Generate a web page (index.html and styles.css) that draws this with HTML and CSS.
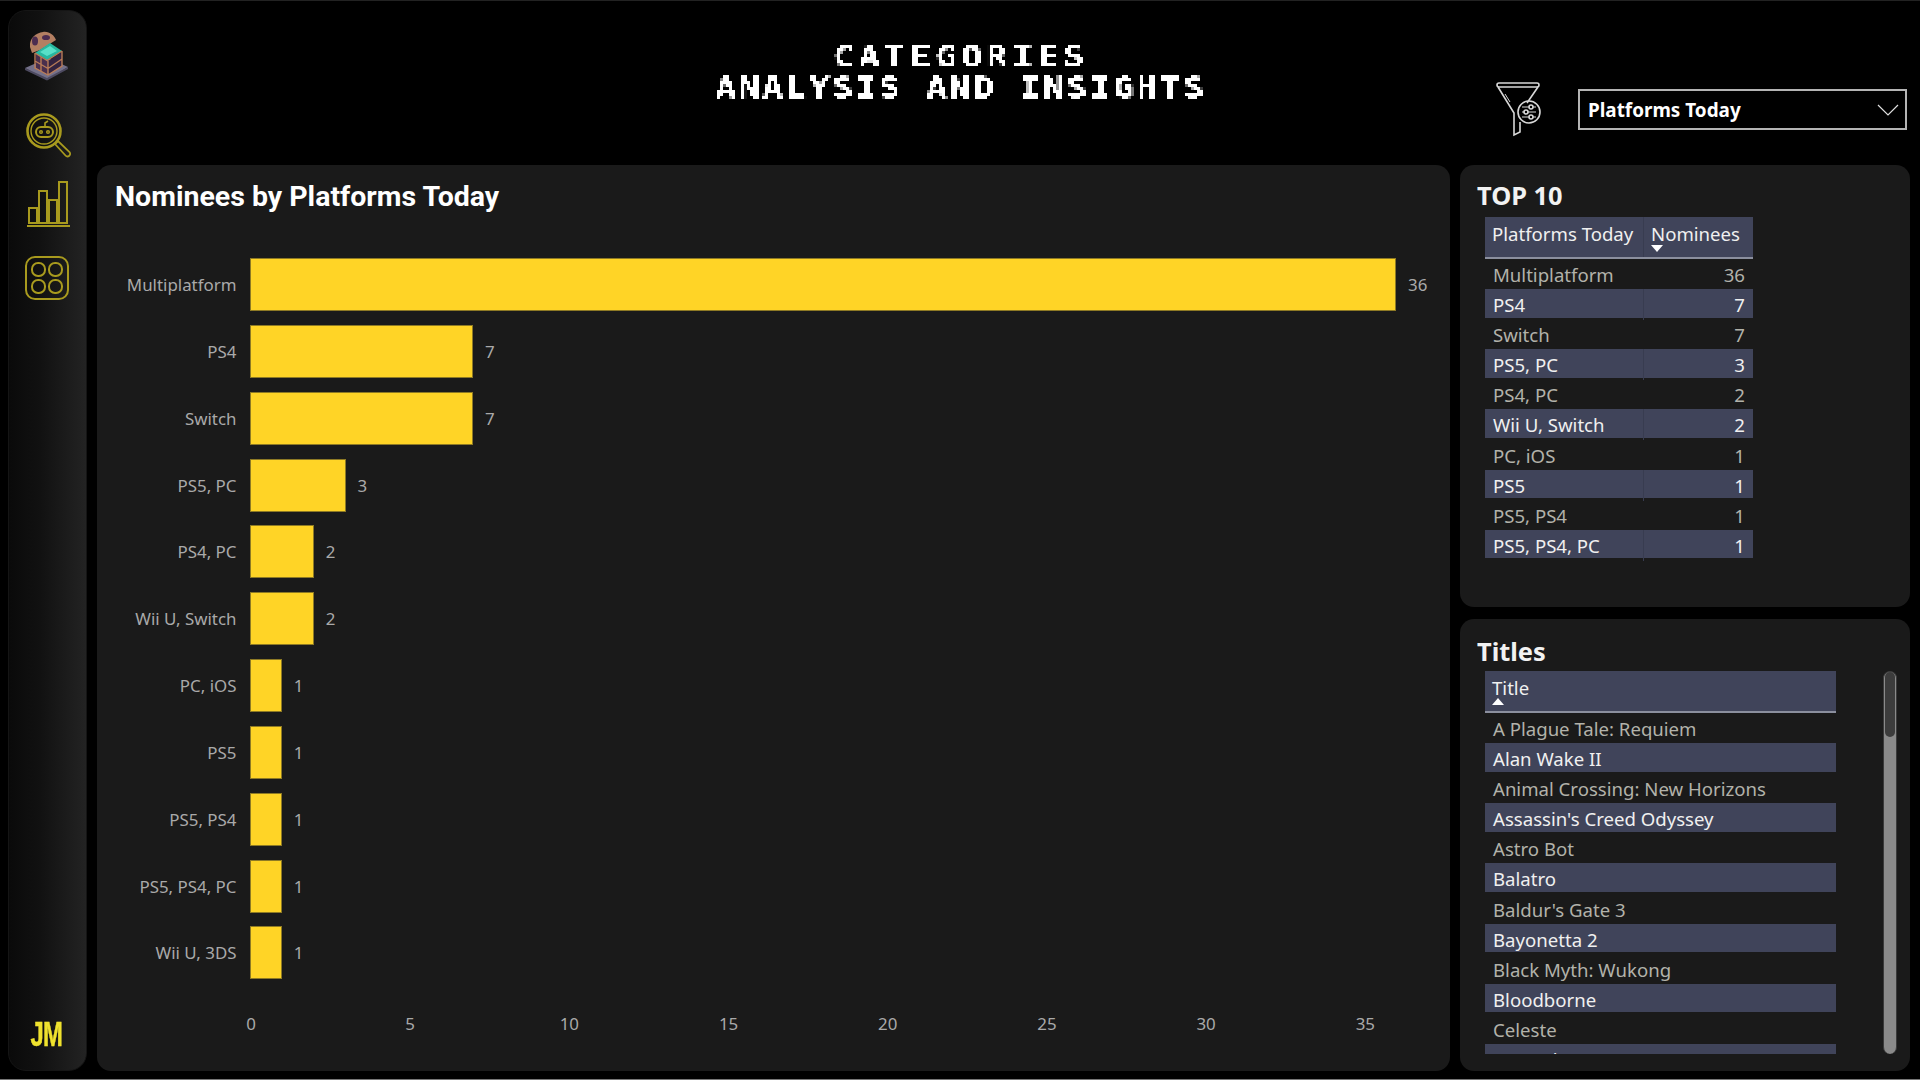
FILE: index.html
```html
<!DOCTYPE html>
<html lang="en">
<head>
<meta charset="utf-8">
<title>Categories</title>
<link rel="stylesheet" href="styles.css">
</head>
<body>
<svg class="defs" width="0" height="0" aria-hidden="true">
  <filter id="pixelate" x="0" y="0" width="100%" height="100%" color-interpolation-filters="sRGB">
    <feFlood x="1" y="1" width="1" height="1" flood-color="#fff"/>
    <feComposite width="3" height="3"/>
    <feTile result="grid"/>
    <feComposite in="SourceGraphic" in2="grid" operator="in"/>
    <feMorphology operator="dilate" radius="1"/>
    <feComponentTransfer>
      <feFuncA type="linear" slope="3" intercept="-.8"/>
    </feComponentTransfer>
  </filter>
</svg>
<aside class="sidebar">
  <svg class="nav-icon chest" viewBox="0 0 60 60" width="60" height="60">
    <path d="M7 42 L30 32 L50 41 L29 54 Z" fill="#74718a"/>
    <path d="M7 42 L29 52 L50 41 L50 43 L29 54.5 L7 44 Z" fill="#4d4a60"/>
    <path d="M18 27 L30 35 L30 49 L18 42 Z" fill="#4a2f4d"/>
    <path d="M30 35 L44 26 L44 40 L30 49 Z" fill="#33233f"/>
    <path d="M12 21 C11 12 18 7 25 6 C31 5 36 9 38 14 L22 24 L14 27 Z" fill="#b37f62"/>
    <ellipse cx="17" cy="15" rx="3" ry="4.5" fill="#4c2c50"/>
    <ellipse cx="28" cy="11.5" rx="4" ry="2.6" fill="#4c2c50"/>
    <path d="M17 27 L32 17 L44 25 L29 34 Z" fill="#27b7a0"/>
    <path d="M22 26 L32 20 L39 25 L29 30 Z" fill="#58e0c8"/>
    <path d="M17 27 L29 34.5 L44 25 M17 35 L30 42.5 L44 33 M17 27 V42 L30 49 L44 40 V25 M30 35 V49 M23 31 V45" fill="none" stroke="#b87c58" stroke-width="1.4"/>
  </svg>
  <svg class="nav-icon lens" viewBox="0 0 60 60" width="60" height="60" fill="none" stroke="#a89a1e">
    <circle cx="26" cy="26" r="16.5" stroke-width="2.6"/>
    <circle cx="26" cy="26" r="13" stroke-width="1.4"/>
    <path d="M37 39 L47.5 50.5 a2.5 2.5 0 0 0 4 -3.5 L40 36 Z" stroke-width="1.8"/>
    <rect x="18" y="22" width="17" height="10" rx="5" stroke-width="2"/>
    <path d="M27 22 V18 L30 16" stroke-width="1.6"/>
    <circle cx="23" cy="27" r="1.3" stroke-width="1.5"/>
    <circle cx="30" cy="27" r="1.3" stroke-width="1.5"/>
  </svg>
  <svg class="nav-icon bars" viewBox="0 0 60 60" width="60" height="60" fill="none" stroke="#a89a1e" stroke-width="2">
    <rect x="11" y="31" width="8" height="15"/>
    <rect x="21" y="14" width="8" height="32"/>
    <rect x="31" y="23" width="8" height="23"/>
    <rect x="41" y="5" width="8" height="41"/>
    <path d="M9 49 H52"/>
  </svg>
  <svg class="nav-icon grid-icon" viewBox="0 0 60 60" width="60" height="60" fill="none" stroke="#a89a1e" stroke-width="2">
    <rect x="8" y="9" width="42" height="42" rx="9"/>
    <rect x="14" y="15" width="13" height="13" rx="6"/>
    <rect x="31" y="15" width="13" height="13" rx="6"/>
    <rect x="14" y="32" width="13" height="13" rx="6"/>
    <rect x="31" y="32" width="13" height="13" rx="6"/>
  </svg>
  <div class="logo">JM</div>
</aside>
<div class="content">
  <header class="topbar">
    <h1 class="page-title"><span class="line-one">CATEGORIES</span><span class="line-two">ANALYSIS AND INSIGHTS</span></h1>
    <svg class="filter-icon" viewBox="0 0 48 56" width="48" height="56" fill="none" stroke="#d8d8d8" stroke-width="1.6">
      <path d="M3 2 H41 a1.5 1.5 0 0 1 0 4 H3 a1.5 1.5 0 0 1 0 -4 Z"/>
      <path d="M2 6 L18 32 V54 L24 51 V41 M42 6 L31 22"/>
      <path d="M9 13 L14 21" stroke-width="1"/>
      <circle cx="33" cy="31" r="11"/>
      <path d="M26 26 H40 M26 31 H40 M26 36 H40" stroke-width="1.2"/>
      <circle cx="35" cy="26" r="2" fill="#000"/><circle cx="30" cy="31" r="2" fill="#000"/><circle cx="35" cy="36" r="2" fill="#000"/>
    </svg>
    <div class="dropdown">
      <span>Platforms Today</span>
      <svg viewBox="0 0 22 12" width="22" height="12" fill="none" stroke="#e0e0e0" stroke-width="1.2"><path d="M1 1 L11 11 L21 1"/></svg>
    </div>
  </header>
  <main class="panels">
    <section class="card chart-card">
      <h2 class="chart-title">Nominees by Platforms Today</h2>
      <div class="chart">
        <div class="row"><span class="label">Multiplatform</span><div class="bar" style="width:1146px"></div><span class="val">36</span></div>
        <div class="row"><span class="label">PS4</span><div class="bar" style="width:222.9px"></div><span class="val">7</span></div>
        <div class="row"><span class="label">Switch</span><div class="bar" style="width:222.9px"></div><span class="val">7</span></div>
        <div class="row"><span class="label">PS5, PC</span><div class="bar" style="width:95.5px"></div><span class="val">3</span></div>
        <div class="row"><span class="label">PS4, PC</span><div class="bar" style="width:63.7px"></div><span class="val">2</span></div>
        <div class="row"><span class="label">Wii U, Switch</span><div class="bar" style="width:63.7px"></div><span class="val">2</span></div>
        <div class="row"><span class="label">PC, iOS</span><div class="bar" style="width:31.8px"></div><span class="val">1</span></div>
        <div class="row"><span class="label">PS5</span><div class="bar" style="width:31.8px"></div><span class="val">1</span></div>
        <div class="row"><span class="label">PS5, PS4</span><div class="bar" style="width:31.8px"></div><span class="val">1</span></div>
        <div class="row"><span class="label">PS5, PS4, PC</span><div class="bar" style="width:31.8px"></div><span class="val">1</span></div>
        <div class="row"><span class="label">Wii U, 3DS</span><div class="bar" style="width:31.8px"></div><span class="val">1</span></div>
      </div>
      <div class="axis">
        <span class="tick"><i>0</i></span><span class="tick"><i>5</i></span><span class="tick"><i>10</i></span><span class="tick"><i>15</i></span><span class="tick"><i>20</i></span><span class="tick"><i>25</i></span><span class="tick"><i>30</i></span><span class="tick"><i>35</i></span>
      </div>
    </section>
    <div class="side">
      <section class="card top-card">
        <h2 class="side-title">TOP 10</h2>
        <div class="table top-table">
          <div class="thead two">
            <div class="th">Platforms Today</div>
            <div class="th">Nominees<span class="sort down"></span></div>
          </div>
          <div class="tr two"><div class="td">Multiplatform</div><div class="td num">36</div></div>
          <div class="tr two"><div class="td">PS4</div><div class="td num">7</div></div>
          <div class="tr two"><div class="td">Switch</div><div class="td num">7</div></div>
          <div class="tr two"><div class="td">PS5, PC</div><div class="td num">3</div></div>
          <div class="tr two"><div class="td">PS4, PC</div><div class="td num">2</div></div>
          <div class="tr two"><div class="td">Wii U, Switch</div><div class="td num">2</div></div>
          <div class="tr two"><div class="td">PC, iOS</div><div class="td num">1</div></div>
          <div class="tr two"><div class="td">PS5</div><div class="td num">1</div></div>
          <div class="tr two"><div class="td">PS5, PS4</div><div class="td num">1</div></div>
          <div class="tr two"><div class="td">PS5, PS4, PC</div><div class="td num">1</div></div>
        </div>
      </section>
      <section class="card titles-card">
        <h2 class="side-title">Titles</h2>
        <div class="titles-body">
          <div class="table titles-table">
            <div class="thead one">
              <div class="th">Title<span class="sort up"></span></div>
            </div>
            <div class="tr"><div class="td">A Plague Tale: Requiem</div></div>
            <div class="tr"><div class="td">Alan Wake II</div></div>
            <div class="tr"><div class="td">Animal Crossing: New Horizons</div></div>
            <div class="tr"><div class="td">Assassin's Creed Odyssey</div></div>
            <div class="tr"><div class="td">Astro Bot</div></div>
            <div class="tr"><div class="td">Balatro</div></div>
            <div class="tr"><div class="td">Baldur's Gate 3</div></div>
            <div class="tr"><div class="td">Bayonetta 2</div></div>
            <div class="tr"><div class="td">Black Myth: Wukong</div></div>
            <div class="tr"><div class="td">Bloodborne</div></div>
            <div class="tr"><div class="td">Celeste</div></div>
            <div class="tr"><div class="td">Control</div></div>
          </div>
          <div class="scrollbar"><div class="thumb"></div></div>
        </div>
      </section>
    </div>
  </main>
</div>
</body>
</html>
```
FILE: styles.css
```css
* { box-sizing: border-box; margin: 0; padding: 0; }
html, body { width: 1920px; height: 1080px; overflow: hidden; }
body {
  background: #000;
  display: flex;
  gap: 10px;
  padding: 9px 10px 8px 8px;
  border-top: 1px solid #222;
  border-bottom: 1px solid #777;
  font-family: "Noto Sans", "Open Sans", sans-serif;
  color: #fff;
}
.defs { position: absolute; }
.sidebar {
  width: 79px;
  flex: none;
  border-radius: 18px;
  background: linear-gradient(90deg, #0a0a0a 0%, #111 40%, #232323 100%);
  border: 1px solid #151515;
  display: flex;
  flex-direction: column;
  align-items: flex-start;
  padding-top: 15px;
  padding-left: 9px;
}
.nav-icon { display: block; flex: none; }
.lens { margin-top: 19px; }
.bars { margin-top: 12px; }
.grid-icon { margin-top: 11px; }
.logo {
  align-self: center;
  margin-top: auto;
  margin-left: -11px;
  margin-bottom: 18px;
  font-family: "Liberation Sans Narrow", "Liberation Sans", sans-serif;
  font-weight: 700;
  font-size: 35px;
  line-height: 36px;
  letter-spacing: -1px;
  color: #efe22e;
  -webkit-text-stroke: .5px #efe22e;
  transform: scaleX(.68);
}
.content { flex: 1; min-width: 0; display: flex; flex-direction: column; }
.topbar {
  height: 155px;
  flex: none;
  display: flex;
  align-items: flex-start;
  padding-left: 619px;
}
.page-title {
  margin-top: 32px;
  width: 490px;
  text-align: center;
  white-space: nowrap;
  font-family: "DejaVu Sans Mono", monospace;
  font-weight: 700;
  font-size: 30px;
  line-height: 30px;
  letter-spacing: 1.94px;
  color: #fff;
  filter: url(#pixelate);
  transform: scaleX(1.17);
}
.line-one, .line-two { display: block; height: 30.6px; }
.line-one { letter-spacing: 3.8px; }
.filter-icon { margin-left: auto; margin-top: 71px; margin-right: 34px; flex: none; }
.dropdown {
  margin-top: 79px;
  margin-right: 3px;
  width: 329px;
  height: 41px;
  border: 2px solid #b4b4b4;
  display: flex;
  align-items: center;
  justify-content: space-between;
  padding: 0 6px 0 8px;
  font-size: 18.9px;
  font-weight: 700;
}
.panels { flex: 1; min-height: 0; display: flex; gap: 10px; }
.card { background: #1a1a1a; border-radius: 14px; }
.chart-card {
  width: 1353px;
  flex: none;
  padding: 14px 17px 0 18px;
}
.chart-title {
  font-family: "Roboto", sans-serif;
  font-weight: 700;
  font-size: 28.5px;
  line-height: 36px;
  height: 38px;
  color: #fff;
}
.chart { margin-top: 41px; display: flex; flex-direction: column; gap: 13.85px; }
.row { display: flex; align-items: center; height: 53px; }
.label {
  width: 121.5px;
  margin-right: 13.5px;
  flex: none;
  text-align: right;
  font-size: 16.9px;
  color: #a9a9a9;
  white-space: nowrap;
}
.bar { height: 53px; background: #ffd426; border: 1px solid #8e7a24; flex: none; }
.val { margin-left: 12px; font-size: 16.9px; color: #a9a9a9; }
.axis { display: flex; margin-top: 34px; margin-left: 136px; }
.tick { width: 159.2px; flex: none; height: 22px; position: relative; font-size: 16.9px; color: #a9a9a9; }
.tick i { font-style: normal; display: block; width: 40px; margin-left: -20px; text-align: center; line-height: 22px; }
.side { flex: 1; min-width: 0; display: flex; flex-direction: column; gap: 12px; }
.top-card { height: 442px; flex: none; padding: 14px 0 0 17px; }
.titles-card { flex: 1; min-height: 0; padding: 14px 0 0 17px; }
.side-title {
  font-family: "Noto Sans", sans-serif;
  font-weight: 700;
  font-size: 25.4px;
  line-height: 33px;
  height: 38px;
  color: #f2f2f2;
}
.titles-card .side-title { line-height: 36px; }
.table { margin-left: 8px; font-size: 18.6px; }
.top-table { width: 268px; }
.titles-body { display: flex; }
.titles-table { width: 351px; height: 383px; overflow: hidden; margin-top: 0; }
.two { display: grid; grid-template-columns: 158px 110px; }
.thead {
  background: #40445a;
  height: 42px;
  border-bottom: 2px solid #8b8f9e;
  color: #f0f0f0;
}
.th { position: relative; padding: 0 7px; line-height: 33px; white-space: nowrap; }
.two .th + .th { border-left: 1px solid #383c50; }
.sort { position: absolute; left: 7px; top: 28px; width: 0; height: 0; border-left: 6.5px solid transparent; border-right: 6.5px solid transparent; }
.sort.down { border-top: 7px solid #fff; }
.sort.up { border-bottom: 7px solid #fff; top: 27px; }
.tr { height: 28.5px; margin-bottom: 1.6px; line-height: 31px; color: #b2b2aa; white-space: nowrap; }
.tr:nth-child(odd) { background: #40445a; color: #f0f0f0; }
.td { padding: 0 8px; height: 100%; }
.tr.two:nth-child(odd) .td + .td { border-left: 1px solid #383c50; }
.num { text-align: right; }
.scrollbar {
  margin-left: 47px;
  width: 14px;
  height: 383px;
  background: #8a8a8a;
  border-radius: 7px;
  border: 1px solid #3a3a3a;
  border-width: 1px 1px 0;
  flex: none;
}
.thumb { height: 65px; background: #3c3c3c; border-radius: 6px; margin: 0 1px; }
```
